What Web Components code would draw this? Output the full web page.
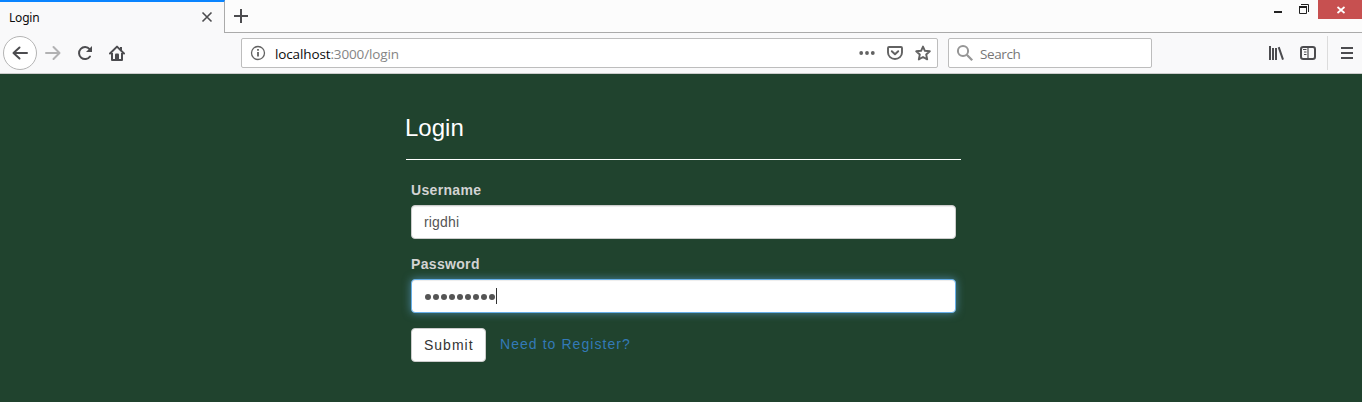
<!DOCTYPE html>
<html lang="en"><head><meta charset="utf-8"><title>Login</title>
<style>html,body{margin:0;height:100%;overflow:hidden;background:#20432e}</style></head>
<body><browser-window></browser-window>
<script>
const define=(name,html)=>customElements.define(name,class extends HTMLElement{
  constructor(){super();this.attachShadow({mode:'open'}).innerHTML=html;}
});
const icons={
  close:[12,12,'<path d="M1.500 1.500l9 9m0-9l-9 9" stroke-width="1.600"/>'],
  plus:[16,16,'<path d="M8 1v14M1 8h14" stroke-width="2"/>'],
  back:[16,16,'<path d="M15 8H2M7.500 2.500L1.500 8l6 5.500" stroke-width="2" stroke-linecap="round" stroke-linejoin="round"/>'],
  forward:[16,16,'<path d="M1 8h13M8.500 2l6 6-6 6" stroke-width="2" stroke-linecap="round" stroke-linejoin="round"/>'],
  reload:[16,16,'<path d="M13 11.500A6 6 0 1 1 12.600 4.200" stroke-width="2" stroke-linecap="round"/><path d="M15 1v6H9z" fill="currentColor" stroke="none"/>'],
  home:[16,16,'<path d="M1 8.500L8 1.600l7 6.900" stroke-width="2" stroke-linecap="round" stroke-linejoin="round"/><path d="M3 8v7h10V8" stroke-width="2" stroke-linejoin="round"/><path d="M6 15V9.500Q6 8.500 7 8.500h2q1 0 1 1V15z" fill="currentColor" stroke="none"/><path d="M12 2v3" stroke-width="2"/>'],
  info:[16,16,'<circle cx="8" cy="8" r="6.500" stroke-width="1.300"/><path d="M8 7v4.500M8 4v1.800" stroke-width="1.800"/>'],
  dots:[16,16,'<g fill="currentColor" stroke="none"><circle cx="2.200" cy="8" r="1.900"/><circle cx="8" cy="8" r="1.900"/><circle cx="13.800" cy="8" r="1.900"/></g>'],
  pocket:[16,16,'<path d="M2 2h12q1 0 1 1v4.500a7 6.500 0 0 1-14 0V3q0-1 1-1z" stroke-width="1.900"/><path d="M4.800 6.200L8 9.300l3.200-3.100" stroke-width="1.900" stroke-linecap="round" stroke-linejoin="round"/>'],
  star:[16,16,'<path d="M8 1.600l1.900 4.200 4.900.5-3.600 3.200 1 4.900L8 12l-4.200 2.400 1-4.900L1.200 6.300l4.900-.5z" stroke-width="1.900" stroke-linejoin="round"/>'],
  search:[18,18,'<circle cx="7" cy="7" r="5.100" stroke-width="2"/><path d="M10.800 10.800L16.200 16.200" stroke-width="2.300"/>'],
  library:[16,16,'<path d="M2 1v14M5 3v12M8 3v12M10.700 2.200L15 14.600" stroke-width="2"/>'],
  sidebar:[16,16,'<rect x="1" y="2" width="14" height="12" rx="2.200" stroke-width="2"/><path d="M8 2v12" stroke-width="1.200"/><path d="M3 4.500h3.500M4 7h2.500M4 9.500h2.500" stroke-width="1"/>'],
  menu:[16,16,'<path d="M2 3h12M2 8h12M2 13h12" stroke-width="2"/>'],
  minimize:[12,12,'<path d="M2 10h8" stroke-width="2"/>'],
  restore:[12,12,'<path d="M3 .500h7.500V8" stroke-width="1"/><path d="M1.500 2v7.500h7V2" stroke-width="1"/><path d="M1 3h8" stroke-width="2"/>'],
  xwin:[10,8,'<path d="M1.500 1l7 6m0-6l-7 6" stroke-width="1.700"/>']
};
customElements.define('ui-icon',class extends HTMLElement{
  constructor(){super();this.attachShadow({mode:'open'});}
  connectedCallback(){
    const [w,h,body]=icons[this.getAttribute('name')];
    this.shadowRoot.innerHTML=`<style>:host{display:block;flex:none;width:${w}px;height:${h}px}svg{display:block}</style><svg width="${w}" height="${h}" fill="none" stroke="currentColor" aria-hidden="true">${body}</svg>`;
  }
});
define('tab-strip',`<style>
:host{display:flex;height:33px;background:#fcfcfc;color:#4c4c4f;box-sizing:border-box}
.tab{box-sizing:border-box;width:225px;border-top:2px solid #0a84ff;border-right:1px solid #aaa;background:#f9f9fa;display:flex;align-items:center;justify-content:space-between;padding:0 11px 0 9px}
.tab ui-icon{margin-top:-1px}
.title{font:12px/16px "Noto Sans",sans-serif;color:#0c0c0d;letter-spacing:-.2px;padding-top:1px}
.rest{flex:1;display:flex;align-items:flex-start;border-bottom:1px solid #aaa;color:#222}
.new{padding:8px 0 0 8px;color:#4c4c4f}
.controls{margin-left:auto;display:flex}
.min{padding:2px 14px 0 0}.restore{padding:4px 8px 0 0}
.close{box-sizing:border-box;width:44px;height:19px;padding-left:2px;background:#c75050;color:#fff;display:flex;align-items:center;justify-content:center}
</style><div class="tab"><span class="title">Login</span><ui-icon name="close"></ui-icon></div>
<div class="rest"><ui-icon class="new" name="plus"></ui-icon><div class="controls"><ui-icon class="min" name="minimize"></ui-icon><ui-icon class="restore" name="restore"></ui-icon><div class="close"><ui-icon name="xwin"></ui-icon></div></div></div>`);
define('address-field',`<style>
:host{display:flex;box-sizing:border-box;width:697px;height:30px;border:1px solid #bdbdbd;border-radius:2px;background:#fff;align-items:center;color:#626262;padding:0 6px 0 8px;margin-left:116px}
.url{font:13.500px/18px "Open Sans",sans-serif;color:#858585;margin:2px auto 0 9px;letter-spacing:-.13px}b{font-weight:400;color:#0c0c0d}
.actions{display:flex;gap:12px}
</style><ui-icon name="info"></ui-icon><span class="url"><b>localhost</b>:3000/login</span><div class="actions"><ui-icon name="dots"></ui-icon><ui-icon name="pocket"></ui-icon><ui-icon name="star"></ui-icon></div>`);
define('search-field',`<style>
:host{display:flex;box-sizing:border-box;width:204px;height:30px;border:1px solid #bdbdbd;border-radius:2px;background:#fff;align-items:center;padding-left:7px;margin-left:10px;color:#969696}
span{font:13.500px/18px "Open Sans",sans-serif;color:#777;letter-spacing:-.4px;margin:2px 0 0 6px}
</style><ui-icon name="search"></ui-icon><span>Search</span>`);
define('nav-bar',`<style>
:host{display:flex;height:41px;box-sizing:border-box;background:#f9f9fa;border-bottom:1px solid #ccc;align-items:center;color:#4c4c4f;padding:0 7px 0 3px}
.back{width:34px;height:34px;box-sizing:border-box;border:1px solid #b4b4b4;border-radius:50%;background:#fff;display:flex;align-items:center;justify-content:center}
.nav{display:flex;gap:16px;margin-left:8px}.fwd{color:#b2b2b3}
.tools{display:flex;align-items:center;gap:16px;margin-left:auto}
.sep{width:1px;height:34px;background:#dcdcdc;margin:0 11px}
</style><div class="back"><ui-icon name="back"></ui-icon></div><div class="nav"><ui-icon class="fwd" name="forward"></ui-icon><ui-icon name="reload"></ui-icon><ui-icon name="home"></ui-icon></div>
<address-field></address-field><search-field></search-field>
<div class="tools"><ui-icon name="library"></ui-icon><ui-icon name="sidebar"></ui-icon></div><div class="sep"></div><ui-icon name="menu"></ui-icon>`);
define('form-field',`<style>
:host{display:block;height:74px;font:14px/20px "Liberation Sans",Arial,sans-serif}
.label{font-weight:700;color:#d3d3d3;letter-spacing:.33px;height:25px}
.input{box-sizing:border-box;height:34px;border:1px solid #ccc;border-radius:4px;background:#fff;color:#555;padding:6px 12px;box-shadow:inset 0 1px 1px rgba(0,0,0,.075);display:flex;align-items:center;letter-spacing:.15px}
:host([focused]) .input{border-color:#66afe9;box-shadow:inset 0 1px 1px rgba(0,0,0,.075),0 0 8px rgba(102,175,233,.6)}
</style><div class="label"><slot name="label"></slot></div><div class="input"><slot></slot></div>`);
define('password-dots',`<style>:host{display:flex;align-items:center}i{width:6px;height:6px;border-radius:50%;background:#555;margin:1px 1px 0}b{width:1px;height:16px;background:#333}</style>${'<i></i>'.repeat(9)}<b></b>`);
define('login-form',`<style>
:host{display:block;width:555px;margin-left:406px;padding-top:38px;font:14px/20px "Liberation Sans",Arial,sans-serif}
h1{margin:0;font-size:24px;line-height:32px;font-weight:400;color:#fff;height:47px;border-bottom:1px solid #fff;text-indent:-1px}
.body{padding:20px 5px 0}
.actions{display:flex;letter-spacing:1px}
.submit{box-sizing:border-box;width:75px;height:34px;border:1px solid #ccc;border-radius:4px;background:#fff;color:#333;padding:6px 0 0 12px}
.register{color:#337ab7;margin:6px 0 0 14px;letter-spacing:1.060px}
</style><h1>Login</h1><div class="body"><form-field><span slot="label">Username</span>rigdhi</form-field><form-field focused><span slot="label">Password</span><password-dots></password-dots></form-field><div class="actions"><div class="submit">Submit</div><span class="register">Need to Register?</span></div></div>`);
define('browser-window',`<style>:host{display:flex;flex-direction:column;height:402px}main{flex:1;background:#20432e}</style><tab-strip></tab-strip><nav-bar></nav-bar><main><login-form></login-form></main>`);
</script></body></html>
